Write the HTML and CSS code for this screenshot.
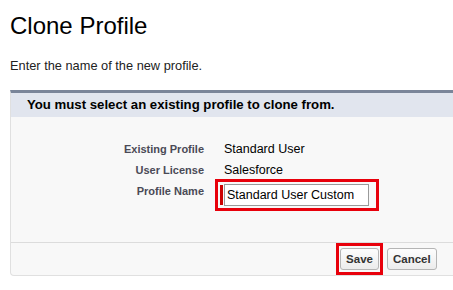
FILE: index.html
```html
<!DOCTYPE html>
<html lang="en">
<head>
  <meta charset="UTF-8">
  <title>Clone Profile</title>
  <link rel="stylesheet" href="styles.css">
</head>
<body>
  <h1>Clone Profile</h1>
  <p class="intro">Enter the name of the new profile.</p>

  <div class="panel">
    <div class="panel-head">You must select an existing profile to clone from.</div>
    <div class="panel-body">
      <div class="row">
        <span class="label">Existing Profile</span>
        <span class="value">Standard User</span>
      </div>
      <div class="row">
        <span class="label">User License</span>
        <span class="value">Salesforce</span>
      </div>
      <div class="row row-input">
        <span class="label">Profile Name</span>
        <div class="highlight field-box">
          <span class="required"></span>
          <input class="field" type="text" value="Standard User Custom">
        </div>
      </div>
    </div>
    <div class="panel-foot">
      <div class="highlight btn-box"><button class="btn">Save</button></div>
      <button class="btn">Cancel</button>
    </div>
  </div>
</body>
</html>
```

FILE: styles.css
```css
* { box-sizing: border-box; }
body {
  margin: 0;
  padding: 0 0 0 10px;
  font-family: "Liberation Sans", Arial, sans-serif;
  color: #000;
  background: #fff;
  overflow: hidden;
}
h1 {
  margin: 0;
  padding-top: 11px;
  font-size: 24px;
  font-weight: normal;
  line-height: 30px;
}
.intro {
  margin: 0;
  padding-top: 17px;
  font-size: 12.8px;
  line-height: 15px;
  color: #222;
}
.panel {
  margin-top: 17px;
  width: 460px;
  border-top: 3px solid #7a8599;
  border-left: 1px solid #e0e0e0;
  border-bottom: 1px solid #e0e0e0;
  border-radius: 0 0 0 4px;
  background: #f8f8f8;
}
.panel-head {
  background: #e1e5ee;
  height: 24px;
  padding: 4px 0 0 16px;
  font-size: 13.2px;
  font-weight: bold;
  color: #000;
}
.panel-body {
  padding: 24px 0 38px;
  border-bottom: 1px solid #dcdcdc;
}
.row {
  display: flex;
  align-items: flex-start;
  height: 21px;
}
.label {
  width: 193px;
  text-align: right;
  font-size: 11px;
  font-weight: bold;
  color: #4a4a56;
  padding-top: 2px;
}
.value {
  margin-left: 20px;
  padding-top: 1px;
  font-size: 12.5px;
  color: #000;
}
.highlight {
  border: 3px solid #e8000b;
}
.field-box {
  display: flex;
  align-items: center;
  margin: -4px 0 0 11px;
  width: 164px;
  height: 32px;
  padding-left: 2px;
}
.required {
  width: 3px;
  height: 20px;
  background: #c00;
  margin-right: 1px;
}
.field {
  width: 145px;
  height: 22px;
  border: 1px solid #9a9a9a;
  padding: 1px 2px;
  font-family: "Liberation Sans", Arial, sans-serif;
  font-size: 12.5px;
  color: #000;
  background: #fff;
}
.panel-foot {
  display: flex;
  align-items: center;
  padding: 0 0 0 325px;
  gap: 4px;
}
.btn-box {
  width: 47px;
  height: 32px;
  display: flex;
  align-items: center;
  justify-content: center;
}
.btn {
  height: 22px;
  padding: 0 5px;
  border: 1px solid #b5b5b5;
  border-radius: 3px;
  background: linear-gradient(#fdfdfd, #ececec);
  font-family: "Liberation Sans", Arial, sans-serif;
  font-size: 11.5px;
  font-weight: bold;
  color: #333;
}
```
